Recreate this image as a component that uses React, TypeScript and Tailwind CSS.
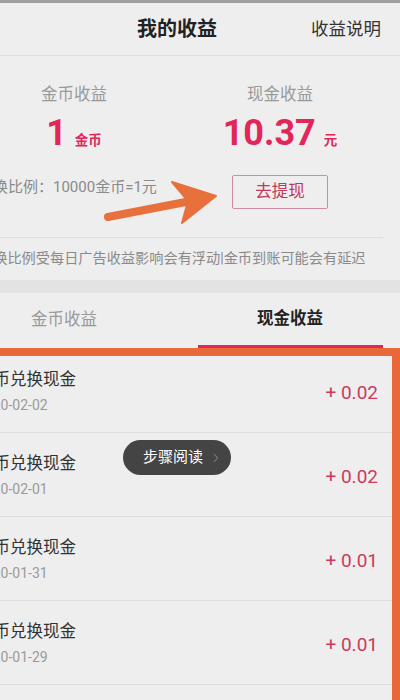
import { ChevronRight } from "lucide-react";

const rows = [
  { title: "金币兑换现金", date: "2020-02-02", amount: "+ 0.02" },
  { title: "金币兑换现金", date: "2020-02-01", amount: "+ 0.02" },
  { title: "金币兑换现金", date: "2020-01-31", amount: "+ 0.01" },
  { title: "金币兑换现金", date: "2020-01-29", amount: "+ 0.01" },
  { title: "金币兑换现金", date: "2020-01-28", amount: "+ 0.01" },
];

function Arrow() {
  return (
    <svg className="absolute left-0 top-0 pointer-events-none" width={400} height={700} viewBox="0 0 400 700">
      <line x1="108" y1="217" x2="196" y2="200" stroke="#e8703c" strokeWidth="8" strokeLinecap="round" />
      <path d="M216 196 L172 182 L188 201 L182 223 Z" fill="#e8703c" strokeLinejoin="round" stroke="#e8703c" strokeWidth="2" />
    </svg>
  );
}

export default function App() {
  return (
    <div
      className="relative w-[400px] h-[700px] overflow-hidden bg-[#eeeeee]"
      style={{ fontFamily: 'Roboto, "Noto Sans CJK SC", sans-serif' }}
    >
      <div className="h-[3px] bg-[#9f9f9f]" />
      <div className="w-[452px] -ml-[49px]">
        {/* header */}
        <div className="h-[53px] flex items-center justify-center relative border-b border-[#dcdcdc]">
          <span className="text-[20px] font-bold text-[#222]">我的收益</span>
          <span className="absolute right-[22px] text-[17.5px] text-[#333]">收益说明</span>
        </div>

        {/* stats */}
        <div className="pt-[28px] pb-[12px]">
          <div className="flex">
            <div className="w-[246px] flex flex-col items-center">
              <span className="text-[16.5px] leading-[22px] text-[#9a9a9a]">金币收益</span>
              <div className="mt-[9px] flex items-baseline text-[#e3265a]">
                <span className="text-[36px] leading-none font-bold">1</span>
                <span className="ml-[8px] text-[13.5px] font-bold">金币</span>
              </div>
            </div>
            <div className="w-[166px] flex flex-col items-center">
              <span className="text-[16.5px] leading-[22px] text-[#9a9a9a]">现金收益</span>
              <div className="mt-[9px] flex items-baseline text-[#e3265a]">
                <span className="text-[36px] leading-none font-bold">10.37</span>
                <span className="ml-[8px] text-[13.5px] font-bold">元</span>
              </div>
            </div>
          </div>

          <div className="flex mt-[24px]">
            <div className="w-[246px] pl-[27px]">
              <span className="text-[15px] leading-[20px] text-[#8a8a8a] whitespace-nowrap">兑换比例：10000金币=1元</span>
            </div>
            <div className="w-[166px] flex justify-center">
              <div className="w-[96px] h-[34px] flex items-center justify-center border border-[#cf8c9c] rounded-[2px] text-[16.5px] text-[#c3395c]">
                去提现
              </div>
            </div>
          </div>

          <div className="mt-[28px] ml-[28px] mr-[20px] h-px bg-[#dedede]" />
          <div className="mt-[10px] pl-[28px] text-[14.2px] leading-[20px] text-[#8a8a8a] whitespace-nowrap">
            兑换比例受每日广告收益影响会有浮动|金币到账可能会有延迟
          </div>
        </div>

        <div className="h-[13px] bg-[#e3e3e3]" />

        {/* tabs */}
        <div className="flex h-[55px]">
          <div className="w-1/2 flex items-center justify-center text-[16.5px] text-[#9a9a9a]">金币收益</div>
          <div className="w-1/2 flex flex-col items-center">
            <div className="flex-1 flex items-center text-[16.5px] font-bold text-[#222]">现金收益</div>
            <div className="w-[185px] h-[3px] bg-[#e3265a]" />
          </div>
        </div>

        {/* list */}
        <div className="pt-px">
          {rows.map((r, i) => (
            <div key={i} className="h-[84px] flex items-center justify-between border-b border-[#dedede] pl-[26px] pr-[25px]">
              <div className="flex flex-col pt-[3px]">
                <span className="text-[16.5px] leading-[22px] text-[#333]">{r.title}</span>
                <span className="mt-[4px] text-[14px] leading-[20px] text-[#9a9a9a]">{r.date}</span>
              </div>
              <span className="pt-[5px] text-[19px] text-[#cc3a5e]">{r.amount}</span>
            </div>
          ))}
        </div>
      </div>

      {/* annotation overlays */}
      <Arrow />
      <div className="absolute left-[-10px] top-[348px] w-[410px] h-[370px] border-[8px] border-[#e8683a]" />
      <div className="absolute left-[123px] top-[440px] w-[108px] h-[35px] rounded-full bg-[#444444] flex items-center pl-[20px]">
        <span className="text-[15px] text-white">步骤阅读</span>
        <ChevronRight className="ml-[6px] text-[#9a9a9a]" size={14} strokeWidth={1.5} />
      </div>
    </div>
  );
}
